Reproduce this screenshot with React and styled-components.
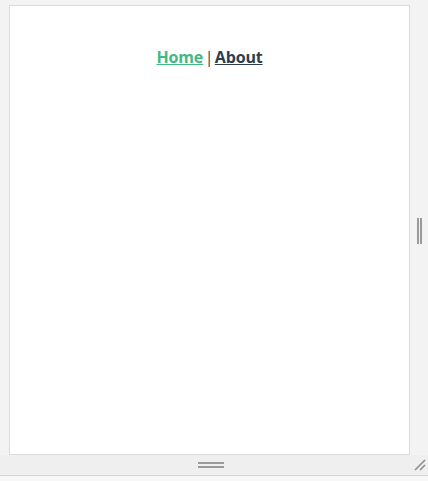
import styled, { createGlobalStyle } from 'styled-components';

const GlobalStyle = createGlobalStyle`
  html, body {
    margin: 0;
    padding: 0;
    background: #f3f3f3;
  }
`;

const Frame = styled.div`
  width: 428px;
  height: 481px;
  display: flex;
  flex-direction: column;
  background: #f3f3f3;
  overflow: hidden;
`;

const Row = styled.div`
  display: flex;
  padding: 5px 0 0 9px;
`;

const Panel = styled.div`
  width: 401px;
  height: 450px;
  box-sizing: border-box;
  background: #ffffff;
  border: 1px solid #dcdcdc;
  padding-top: 40px;
  font-family: "Open Sans", "Noto Sans", sans-serif;
  -webkit-font-smoothing: antialiased;
  color: #2c3e50;
  text-align: center;
`;

const Nav = styled.nav`
  font-size: 16px;
  font-weight: 700;
  line-height: 22px;
  letter-spacing: -0.15px;
`;

const NavLink = styled.a`
  color: ${({ $active }) => ($active ? '#42b983' : '#2c3e50')};
  text-decoration: underline;
  cursor: pointer;
`;

const Separator = styled.span`
  font-weight: 400;
  color: #2c3e50;
  margin: 0 1.5px;
`;

const SideGutter = styled.div`
  flex: 1;
  display: flex;
  align-items: center;
  justify-content: center;
  gap: 1px;
  padding-top: 2px;
`;

const VBar = styled.span`
  width: 2px;
  height: 26px;
  background: #9a9a9a;
`;

const BottomGutter = styled.div`
  position: relative;
  height: 20px;
  display: flex;
  flex-direction: column;
  align-items: center;
  justify-content: center;
  gap: 2px;
  border-bottom: 1px solid #d4d4d4;
  background: #efefef;
`;

const HBar = styled.span`
  width: 26px;
  height: 2px;
  background: #9a9a9a;
  margin-right: 6px;
`;

const Grip = styled.svg`
  position: absolute;
  right: 2px;
  bottom: 4px;
`;

const Footer = styled.div`
  flex: 1;
  background: #f7f7f7;
`;

export default function App() {
  return (
    <>
      <GlobalStyle />
      <Frame>
        <Row>
          <Panel>
            <Nav>
              <NavLink $active>Home</NavLink>
              <Separator>|</Separator>
              <NavLink>About</NavLink>
            </Nav>
          </Panel>
          <SideGutter>
            <VBar />
            <VBar />
          </SideGutter>
        </Row>
        <BottomGutter>
          <HBar />
          <HBar />
          <Grip width="12" height="12" viewBox="0 0 12 12">
            <path d="M1 11 L11 1 M6 11 L11 6" stroke="#8a8a8a" strokeWidth="1.5" />
          </Grip>
        </BottomGutter>
        <Footer />
      </Frame>
    </>
  );
}
